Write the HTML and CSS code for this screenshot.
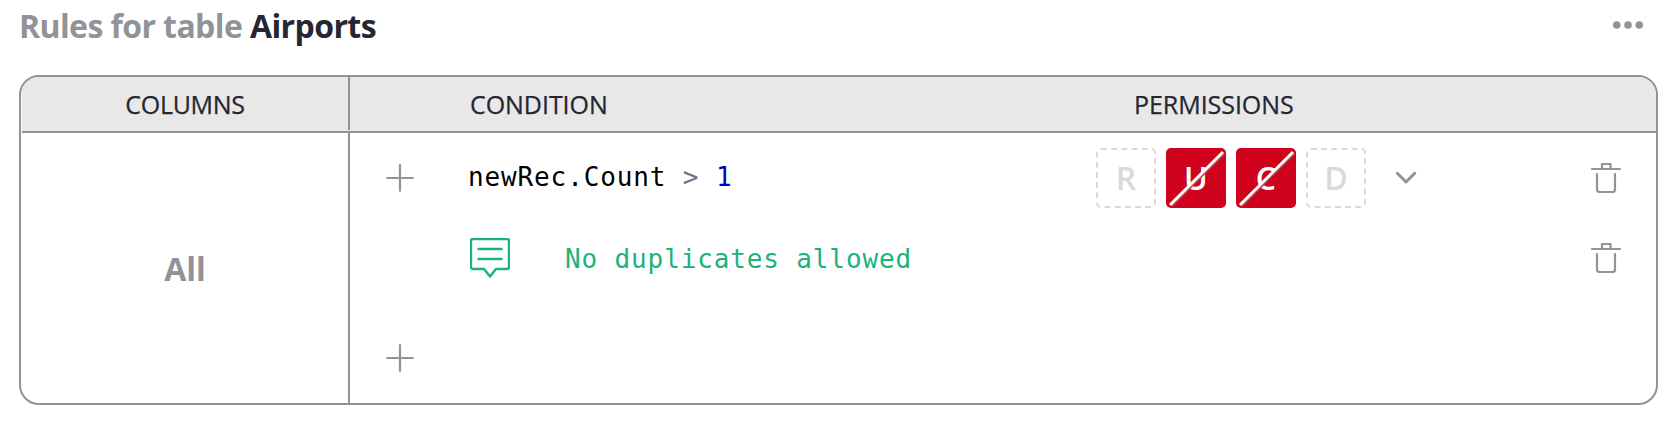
FILE: index.html
```html
<!DOCTYPE html>
<html lang="en">
<head>
<meta charset="utf-8">
<title>Access rules</title>
<link rel="stylesheet" href="styles.css">
</head>
<body>
<header class="title-bar">
  <h1 class="title"><span class="title-prefix">Rules for table</span> <span class="title-name">Airports</span></h1>
  <svg class="dots" width="32" height="10" viewBox="0 0 32 10"><circle cx="4.7" cy="5" r="3.8"/><circle cx="16" cy="5" r="3.8"/><circle cx="27.3" cy="5" r="3.8"/></svg>
</header>
<main class="table">
  <div class="head">
    <div class="head-columns"><span class="label-columns">COLUMNS</span></div>
    <div class="head-rules"><span class="label-condition">CONDITION</span><span class="label-permissions">PERMISSIONS</span></div>
  </div>
  <div class="body">
    <div class="resource"><span class="resource-name">All</span></div>
    <div class="rules">
      <div class="rule">
        <svg class="icon plus" width="28" height="28" viewBox="0 0 28 28"><path d="M14 1.2v25.6M1.2 14h25.6"/></svg>
        <code class="formula">newRec.Count <span class="op">&gt;</span> <span class="num">1</span></code>
        <div class="permissions">
          <span class="perm">R</span>
          <span class="perm deny">U<svg class="slash" width="60" height="60" viewBox="0 0 60 60"><path class="shade" d="M5.500 58L58.500 5"/><path d="M4 57L57 4"/></svg></span>
          <span class="perm deny">C<svg class="slash" width="60" height="60" viewBox="0 0 60 60"><path class="shade" d="M5.500 58L58.500 5"/><path d="M4 57L57 4"/></svg></span>
          <span class="perm">D</span>
        </div>
        <svg class="icon chevron" width="22" height="14" viewBox="0 0 22 14"><path d="M2.3 2.3L11 11L19.7 2.3"/></svg>
        <svg class="icon trash" width="30" height="30" viewBox="0 0 30 30"><path d="M1 6h28M11 6V1h8.500v5M6 11v15.500a2.500 2.500 0 0 0 2.500 2.500h13a2.500 2.500 0 0 0 2.500-2.500V11"/></svg>
      </div>
      <div class="rule memo">
        <svg class="icon comment" width="40" height="40" viewBox="0 0 40 40"><path d="M3 1h34a2 2 0 0 1 2 2v26a2 2 0 0 1-2 2H26l-6 7.500L14 31H3a2 2 0 0 1-2-2V3a2 2 0 0 1 2-2zM8.500 11h23M8.500 21h23"/></svg>
        <span class="memo-text">No duplicates allowed</span>
        <svg class="icon trash" width="30" height="30" viewBox="0 0 30 30"><path d="M1 6h28M11 6V1h8.500v5M6 11v15.500a2.500 2.500 0 0 0 2.500 2.500h13a2.500 2.500 0 0 0 2.500-2.500V11"/></svg>
      </div>
      <div class="add">
        <svg class="icon plus" width="28" height="28" viewBox="0 0 28 28"><path d="M14 1.200v25.600M1.200 14h25.600"/></svg>
      </div>
    </div>
  </div>
</main>
</body>
</html>
```
FILE: styles.css
```css
* { box-sizing: border-box; }
body {
  margin: 0;
  padding: 0 15px 0 19px;
  background: #fff;
  color: #262633;
  font-family: "Segoe UI", "Open Sans", "Noto Sans", sans-serif;
}
svg { display: block; flex: none; }
.title-bar {
  display: flex;
  justify-content: space-between;
  height: 75px;
  padding: 0 14px 0 0;
}
.title {
  margin: 4px 0 0;
  font-size: 32px;
  line-height: 44px;
  font-weight: 700;
  letter-spacing: -0.6px;
  white-space: nowrap;
}
.title-prefix { color: #929299; }
.dots { margin-top: 20px; fill: #929299; }
.table {
  height: 330px;
  border: 2px solid #929299;
  border-radius: 20px;
  overflow: hidden;
  padding-left: 1px;
}
.head {
  display: flex;
  height: 56px;
  border-bottom: 2px solid #929299;
  background: #e8e8e8;
  font-size: 25px;
  line-height: 54px;
  -webkit-text-stroke: 0.25px #262633;
}
.head-columns {
  width: 328px;
  height: 53px;
  border-right: 2px solid #929299;
  text-align: center;
  letter-spacing: -0.3px;
}
.head-rules {
  flex: 1;
  display: grid;
  grid-template-columns: 664px 1fr;
  padding-left: 120px;
  letter-spacing: -0.05px;
}
.body { display: flex; height: 270px; }
.resource {
  width: 328px;
  border-right: 2px solid #929299;
  display: flex;
  align-items: center;
  justify-content: center;
  font-size: 32px;
  font-weight: 700;
  color: #929299;
}
.rules { flex: 1; padding-top: 15px; }
.rule {
  display: flex;
  align-items: center;
  height: 60px;
  padding: 0 35px 0 36px;
}
.icon {
  fill: none;
  stroke: #929299;
  stroke-width: 2.2;
  stroke-linecap: round;
  stroke-linejoin: round;
}
.formula, .memo-text {
  font-family: "DejaVu Sans Mono", monospace;
  font-size: 26px;
  line-height: 32px;
  letter-spacing: 0.87px;
  white-space: nowrap;
}
.formula { width: 628px; margin-left: 54px; padding-bottom: 2px; color: #000; }
.op { color: #687687; }
.num { color: #0000cd; }
.permissions { display: flex; gap: 10px; }
.perm {
  position: relative;
  width: 60px;
  height: 60px;
  border: 2px dashed #d9d9d9;
  border-radius: 5px;
  color: #d9d9d9;
  font-size: 32px;
  line-height: 56px;
  font-weight: 600;
  text-align: center;
}
.deny { border: 0; background: #d0021b; color: #fff; line-height: 60px; }
.slash {
  position: absolute;
  left: 0;
  top: 0;
  fill: none;
  stroke: #fff;
  stroke-width: 3;
}
.slash .shade { stroke: #b8424f; stroke-width: 2.5; }
.chevron { margin-left: 29px; stroke-width: 3; }
.trash { margin-left: auto; }
.memo { margin-top: 20px; padding-left: 120px; }
.memo-text { margin-left: 55px; padding-top: 2px; color: #1bb37a; }
.comment { stroke: #1bb37a; stroke-width: 2.4; }
.add { padding: 56px 0 0 36px; }
```
